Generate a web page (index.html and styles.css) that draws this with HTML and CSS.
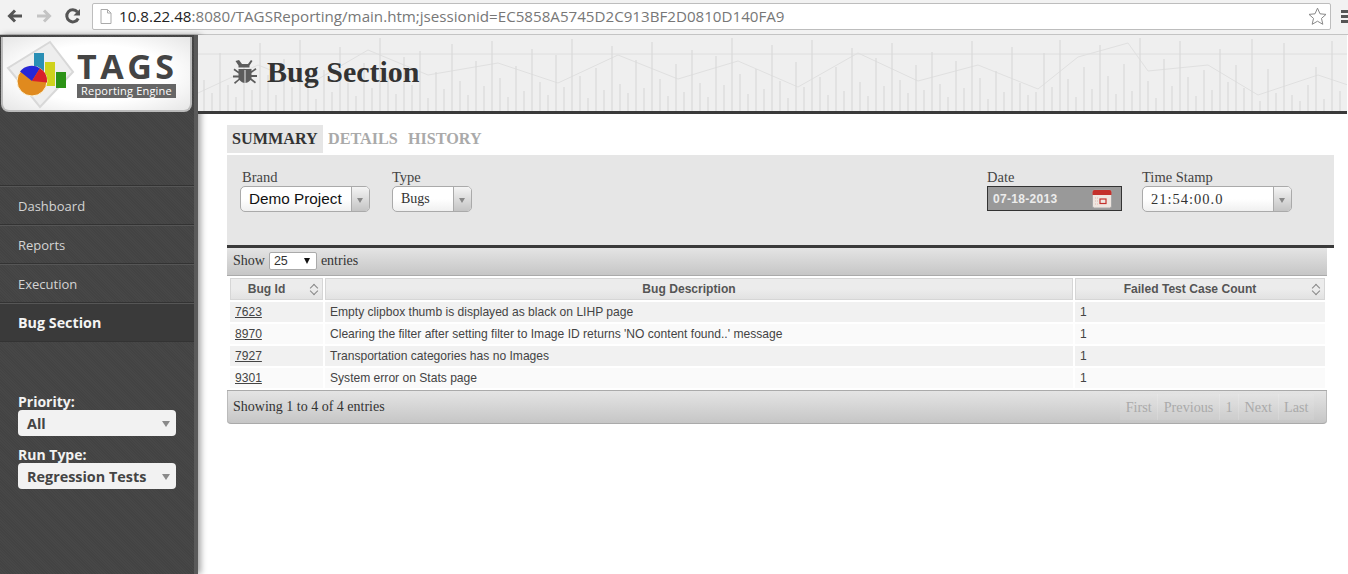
FILE: index.html
```html
<!DOCTYPE html>
<html lang="en">
<head>
  <meta charset="UTF-8">
  <title>TAGS Reporting Engine</title>
  <link rel="stylesheet" href="styles.css">
</head>
<body>
  <div class="chrome">
    <svg class="nav-icon" width="18" height="18" viewBox="0 0 18 18"><path d="M16 9H4M9 3.500 3.500 9 9 14.500" fill="none" stroke="#555" stroke-width="3"/></svg>
    <svg class="nav-icon" width="18" height="18" viewBox="0 0 18 18"><path d="M2 9h12M9 3.500 14.500 9 9 14.500" fill="none" stroke="#c4c4c4" stroke-width="3"/></svg>
    <svg class="nav-icon" width="18" height="18" viewBox="0 0 18 18"><path d="M14.200 11.500A6 6 0 1 1 13.400 5" fill="none" stroke="#555" stroke-width="3"/><path d="M16 2v6.500H9.500z" fill="#555"/></svg>
    <div class="omnibox">
      <svg class="page-icon" width="12" height="15" viewBox="0 0 12 15"><path d="M1 .5h6.500L11 4v10.500H1zM7.500.5V4H11" fill="#fff" stroke="#aaa"/></svg>
      <span class="url"><span class="host">10.8.22.48</span>:8080/TAGSReporting/main.htm;jsessionid=EC5858A5745D2C913BF2D0810D140FA9</span>
      <svg class="star" width="19" height="18" viewBox="0 0 19 18"><path d="M9.500 1.200 12 6.800l6 .6-4.500 4 1.300 5.900-5.300-3.100-5.300 3.100 1.300-5.900L1 7.400l6-.6z" fill="#fff" stroke="#888"/></svg>
    </div>
    <div class="menu-icon"><i></i><i></i><i></i></div>
  </div>

  <div class="app">
    <aside class="sidebar">
      <div class="logo">
        <svg width="71" height="72" viewBox="0 0 71 72">
          <path d="M44 4 67 34 34 69 2 30z" fill="#eeeeee" stroke="#d8d8d8" stroke-width="2"/>
          <rect x="28" y="15" width="10" height="24" fill="#2a8fb5"/>
          <rect x="39" y="24" width="10" height="24" fill="#cfd21c"/>
          <rect x="50" y="34" width="10" height="16" fill="#2c9316"/>
          <circle cx="26" cy="43" r="15" fill="#e08a1e" stroke="#fbf3d8"/>
          <path d="M26 43 14 33.600A15 15 0 0 1 34 30.300z" fill="#2626d8"/>
          <path d="M26 43 34 30.300A15 15 0 0 1 41 44.600z" fill="#d8202a"/>
        </svg>
        <div class="logo-text">
          <div class="logo-name">TAGS</div>
          <div class="logo-tag">Reporting Engine</div>
        </div>
      </div>
      <ul class="side-nav">
        <li>Dashboard</li>
        <li>Reports</li>
        <li>Execution</li>
        <li class="current">Bug Section</li>
      </ul>
      <div class="side-filters">
        <label>Priority:</label>
        <div class="side-select">All</div>
        <label>Run Type:</label>
        <div class="side-select">Regression Tests</div>
      </div>
    </aside>

    <main class="main">
      <header class="page-head">
        <svg class="head-chart" width="1150" height="76" viewBox="0 0 1150 76">
          <path d="M0 19H1150" stroke="#dedede"/>
          <path d="M0 58 60 30 110 50 170 15 230 40 300 28 360 48 420 20 480 44 540 26 600 52 660 18 720 46 780 30 840 54 880 22 930 8 950 36 1010 30 1060 60 1120 40 1150 50" stroke="#e0e0e0" fill="none"/>
          <path d="M6 76V45M14 76V58M22 76V18M30 76V50M38 76V62M46 76V30M54 76V55M62 76V8M70 76V40M78 76V60M86 76V24M94 76V52M102 76V5M110 76V44M118 76V64M126 76V35M134 76V57M142 76V12M150 76V48M158 76V61M166 76V28M174 76V53M182 76V3M190 76V42M198 76V59M206 76V22M214 76V50M222 76V16M230 76V63M238 76V37M246 76V54M254 76V9M262 76V46M270 76V60M278 76V26M286 76V51M294 76V6M302 76V43M310 76V62M318 76V31M326 76V56M334 76V14M342 76V47M350 76V60M358 76V20M366 76V52M374 76V4M382 76V41M390 76V63M398 76V33M406 76V55M414 76V11M422 76V49M430 76V58M438 76V25M446 76V53M454 76V7M462 76V44M470 76V61M478 76V29M486 76V57M494 76V15M502 76V48M510 76V62M518 76V21M526 76V50M534 76V3M542 76V39M550 76V59M558 76V34M566 76V54M574 76V10M582 76V46M590 76V63M598 76V27M606 76V52M614 76V5M622 76V42M630 76V60M638 76V32M646 76V56M654 76V13M662 76V47M670 76V61M678 76V23M686 76V51M694 76V8M702 76V45M710 76V58M718 76V30M726 76V55M734 76V17M742 76V49M750 76V62M758 76V26M766 76V53M774 76V6M782 76V43M790 76V64M798 76V36M806 76V57M814 76V12M822 76V48M830 76V60M838 76V57M846 76V18M854 76V52M862 76V5M870 76V44M878 76V62M886 76V32M894 76V54M902 76V10M910 76V41M918 76V59M926 76V29M934 76V56M942 76V3M950 76V46M958 76V63M966 76V24M974 76V51M982 76V6M990 76V42M998 76V61M1006 76V35M1014 76V55M1022 76V14M1030 76V47M1038 76V30M1046 76V53M1054 76V4M1062 76V66M1070 76V34M1078 76V58M1086 76V8M1094 76V60M1102 76V66M1110 76V50M1118 76V32M1126 76V64M1134 76V6M1142 76V56" stroke="#dadada" stroke-width="1.300" fill="none"/>
        </svg>
        <svg class="bug-icon" width="26" height="26" viewBox="0 0 26 26">
          <path d="M7 1l3 4h6l3-4 1.500 1-3 4.500v2h-11v-2l-3-4.500z" fill="#5c5c5c"/>
          <path d="M6.500 10h13v2l4-3 1 1.500-5 3.500v2h5.500v2h-5.500v1.500l4.500 3.500-1 1.500-4.500-3.500c-1.500 2-3.500 3-5.500 3s-4-1-5.500-3L3 25l-1-1.500 4.500-3.500V18.500H1v-2h5.500v-2l-5-3.500 1-1.500 4 3z" fill="#5c5c5c"/>
          <path d="M13 11v13" stroke="#e8e8e8"/>
        </svg>
        <h1>Bug Section</h1>
      </header>

      <div class="content">
        <div class="tabs">
          <span class="tab active">SUMMARY</span>
          <span class="tab">DETAILS</span>
          <span class="tab">HISTORY</span>
        </div>

        <div class="filters">
          <div class="field">
            <label class="label-brand">Brand</label>
            <div class="combo combo-brand"><span class="combo-value">Demo Project</span><span class="combo-arrow"></span></div>
          </div>
          <div class="field">
            <label>Type</label>
            <div class="combo combo-type"><span class="combo-value">Bugs</span><span class="combo-arrow"></span></div>
          </div>
          <div class="field field-date">
            <label>Date</label>
            <div class="date-box">
              <span>07-18-2013</span>
              <svg width="20" height="20" viewBox="0 0 20 20">
                <rect x=".5" y="1" width="19" height="18" rx="2" fill="#efe6e0" stroke="#a8a8a8"/>
                <path d="M.5 6V3a2 2 0 0 1 2-2h15a2 2 0 0 1 2 2v3z" fill="#c4302b"/>
                <path d="M3 9h3M3 12h3M3 15h3" stroke="#e0b8b0" stroke-dasharray="1 1"/>
                <rect x="8" y="10" width="6" height="4.500" fill="none" stroke="#c4302b" stroke-width="1.200"/>
              </svg>
            </div>
          </div>
          <div class="field">
            <label>Time Stamp</label>
            <div class="combo combo-time"><span class="combo-value">21:54:00.0</span><span class="combo-arrow"></span></div>
          </div>
        </div>

        <div class="grid-wrap">
          <div class="grid-top">
            <span>Show</span>
            <span class="len-select">25<i></i></span>
            <span>entries</span>
          </div>
          <table class="bugs">
            <thead>
              <tr>
                <th class="col-id">Bug Id<span class="sort"></span></th>
                <th>Bug Description</th>
                <th class="col-count">Failed Test Case Count<span class="sort"></span></th>
              </tr>
            </thead>
            <tbody>
              <tr><td><a href="#">7623</a></td><td>Empty clipbox thumb is displayed as black on LIHP page</td><td>1</td></tr>
              <tr><td><a href="#">8970</a></td><td>Clearing the filter after setting filter to Image ID returns 'NO content found..' message</td><td>1</td></tr>
              <tr><td><a href="#">7927</a></td><td>Transportation categories has no Images</td><td>1</td></tr>
              <tr><td><a href="#">9301</a></td><td>System error on Stats page</td><td>1</td></tr>
            </tbody>
          </table>
          <div class="grid-bottom">
            <span>Showing 1 to 4 of 4 entries</span>
            <div class="pager">
              <span>First</span><span>Previous</span><span>1</span><span>Next</span><span>Last</span>
            </div>
          </div>
        </div>
      </div>
    </main>
  </div>
</body>
</html>
```

FILE: styles.css
```css
* {
  box-sizing: border-box;
}
html, body {
  height: 100%;
}
body {
  margin: 0;
  display: flex;
  flex-direction: column;
  overflow: hidden;
  background: #fff;
  color: #333;
  font-family: 'Liberation Serif', serif;
}

/* browser bar */
.chrome {
  height: 35px;
  flex: none;
  display: flex;
  align-items: center;
  padding: 0 0 2px 6px;
  background: #f2f2f2;
  border-bottom: 1px solid #c4c4c4;
}
.nav-icon {
  margin-right: 11px;
  flex: none;
}
.omnibox {
  height: 27px;
  width: 1239px;
  flex: none;
  margin-left: -1px;
  display: flex;
  align-items: center;
  padding: 0 3px 0 7px;
  background: #fff;
  border: 1px solid #bdbdbd;
  border-radius: 2px;
}
.page-icon {
  flex: none;
  margin-right: 7px;
}
.url {
  flex: 1;
  font: 15.150px 'Open Sans', sans-serif;
  color: #777;
  white-space: nowrap;
}
.host {
  color: #222;
}
.menu-icon {
  margin-left: 10px;
  width: 12px;
  flex: none;
}
.menu-icon i {
  display: block;
  height: 3px;
  margin: 2px 0;
  background: #555;
}

.app {
  flex: 1;
  display: flex;
  min-height: 0;
}

/* left column */
.sidebar {
  width: 198px;
  flex: none;
  background: repeating-linear-gradient(45deg, #474747 0 1px, #434343 1px 2px);
  border-right: 4px solid #5a5a5a;
  box-shadow: 3px 0 6px rgba(0, 0, 0, .35);
  font-family: 'Open Sans', sans-serif;
  position: relative;
}
.logo {
  height: 75px;
  margin: 2px 2px 0 1px;
  display: flex;
  align-items: flex-start;
  padding: 1px 0 0 3px;
  background: radial-gradient(ellipse at center, #fff 55%, #e6e6e6 100%);
  border: 2px solid #bbb;
  border-top: 0;
  border-radius: 0 0 8px 8px;
}
.logo-text {
  padding-top: 13px;
}
.logo-name {
  height: 31px;
  font-size: 34px;
  font-weight: 700;
  line-height: 30px;
  letter-spacing: 3.500px;
  color: #444;
}
.logo-tag {
  width: 99px;
  height: 14px;
  margin-top: 2px;
  background: #666;
  color: #fff;
  font-size: 11px;
  line-height: 14px;
  text-align: center;
  letter-spacing: .2px;
}
.side-nav {
  list-style: none;
  margin: 73px 0 0;
  padding: 0;
  border-bottom: 1px solid #333;
}
.side-nav li {
  height: 39px;
  padding-left: 18px;
  border-top: 1px solid #333;
  box-shadow: inset 0 1px 0 #565656;
  font-size: 13px;
  line-height: 40px;
  color: #d4d4d4;
}
.side-nav .current {
  background: #3a3a3a;
  color: #f4f4f4;
  font-size: 14.300px;
  font-weight: 700;
}
.side-filters {
  padding: 51px 0 0 18px;
}
.side-filters label {
  display: block;
  font-size: 14px;
  font-weight: 700;
  line-height: 17px;
  color: #f2f2f2;
}
.side-select {
  position: relative;
  width: 158px;
  height: 26px;
  margin-bottom: 10px;
  padding-left: 9px;
  background: #f2f2f2;
  border-radius: 4px;
  font-size: 14.400px;
  font-weight: 700;
  line-height: 28px;
  color: #444;
}
.side-select::after {
  content: "";
  position: absolute;
  right: 6px;
  top: 11px;
  border: 4px solid transparent;
  border-top: 6px solid #8a8a8a;
  border-bottom: 0;
}

/* page */
.main {
  flex: 1;
  min-width: 0;
}
.page-head {
  position: relative;
  height: 79px;
  display: flex;
  align-items: center;
  padding: 0 0 2px 34px;
  margin-right: 1px;
  background: #efefef;
  border-bottom: 3px solid #3a3a3a;
  overflow: hidden;
}
.head-chart {
  position: absolute;
  left: 0;
  top: 0;
}
.bug-icon {
  position: relative;
  flex: none;
}
.page-head h1 {
  position: relative;
  margin: 0 0 0 9px;
  font-size: 30px;
  font-weight: 700;
  color: #333;
}
.content {
  padding: 11px 0 0 29px;
  width: 1136px;
}
.tabs {
  display: flex;
  height: 28px;
  margin-bottom: 2px;
  font-size: 16.200px;
  font-weight: 700;
  line-height: 29px;
  color: #aaa;
}
.tab {
  padding: 0 5px;
}
.tab.active {
  width: 96px;
  background: #e6e6e6;
  color: #333;
}
.filters {
  height: 93px;
  display: flex;
  padding: 14px 42px 0 13px;
  background: #e6e6e6;
  border-bottom: 3px solid #3a3a3a;
}
.field {
  margin-right: 22px;
}
.field:last-child {
  margin-right: 0;
}
.field-date {
  margin-left: auto;
  margin-right: 20px;
}
.field label {
  display: block;
  height: 17px;
  font-size: 14.500px;
  line-height: 16px;
  color: #444;
}
.field .label-brand {
  padding-left: 2px;
}
.combo {
  height: 26px;
  display: flex;
  border: 1px solid #aaa;
  border-radius: 5px;
  background: linear-gradient(#fff 50%, #f0f0f0);
  overflow: hidden;
}
.combo-value {
  flex: 1;
  padding-left: 8px;
  font-size: 14px;
  line-height: 24px;
  color: #333;
}
.combo-arrow {
  position: relative;
  width: 18px;
  flex: none;
  border-left: 1px solid #aaa;
  background: linear-gradient(#f4f4f4, #c4c4c4);
}
.combo-arrow::after {
  content: "";
  position: absolute;
  left: 5px;
  top: 11px;
  border: 3.500px solid transparent;
  border-top: 5px solid #888;
  border-bottom: 0;
}
.combo-brand {
  width: 130px;
}
.combo-brand .combo-value {
  font: 15.300px/24px 'Liberation Sans', sans-serif;
  color: #111;
}
.combo-type {
  width: 80px;
}
.combo-time {
  width: 150px;
}
.combo-time .combo-value {
  font-size: 14.500px;
  letter-spacing: 1px;
}
.date-box {
  width: 135px;
  height: 25px;
  display: flex;
  align-items: center;
  justify-content: space-between;
  padding: 0 9px 0 5px;
  background: #999;
  border: 1px solid #333;
  font: 700 12px 'Liberation Sans', sans-serif;
  letter-spacing: .3px;
  color: #ececec;
}

/* data table */
.grid-wrap {
  width: 1100px;
}
.grid-top {
  height: 28px;
  display: flex;
  align-items: center;
  gap: 4px;
  padding: 0 0 1px 6px;
  background: linear-gradient(#e4e4e4, #c6c6c6);
  border-bottom: 1px solid #aaa;
  font-size: 14px;
  color: #333;
}
.len-select {
  position: relative;
  width: 48px;
  height: 18px;
  padding-left: 4px;
  background: #fff;
  border: 1px solid #aaa;
  border-radius: 2px;
  font: 12.500px/16px 'Liberation Sans', sans-serif;
}
.len-select i {
  position: absolute;
  right: 6px;
  top: 5px;
  border: 3.500px solid transparent;
  border-top: 6px solid #111;
  border-bottom: 0;
}
.bugs {
  width: 1100px;
  table-layout: fixed;
  border-collapse: separate;
  border-spacing: 2px;
  padding: 0 0 0 1px;
  font: 12.080px 'Liberation Sans', sans-serif;
  color: #444;
}
.bugs th {
  position: relative;
  height: 22px;
  padding: 0 20px 0 0;
  background: linear-gradient(#ececec 50%, #e2e2e2);
  border: 1px solid #d6d6d6;
  font-weight: 700;
  color: #555;
}
.col-id {
  width: 93px;
}
.col-count {
  width: 250px;
}
.sort {
  position: absolute;
  right: 5px;
  top: 5px;
  width: 8px;
  height: 11px;
}
.sort::before,
.sort::after {
  content: "";
  position: absolute;
  left: 0;
  width: 5px;
  height: 5px;
  margin-left: 1.500px;
  border-left: 1px solid #888;
  border-top: 1px solid #888;
  transform: rotate(45deg);
}
.sort::before {
  top: 1px;
}
.sort::after {
  bottom: 1px;
  transform: rotate(225deg);
}
.bugs td {
  height: 20px;
  padding: 0 5px;
}
.bugs tbody tr:nth-child(odd) td {
  background: #f1f1f1;
}
.bugs tbody tr:nth-child(even) td {
  background: #fafafa;
}
.bugs a {
  color: #444;
}
.grid-bottom {
  height: 34px;
  display: flex;
  align-items: center;
  justify-content: space-between;
  padding: 0 13px 0 6px;
  background: linear-gradient(#e4e4e4, #c6c6c6);
  border-top: 1px solid #aaa;
  border-bottom: 1px solid #aaa;
  border-radius: 0 0 4px 4px;
  box-shadow: inset 1px 0 #bbb, inset -1px 0 #bbb;
  font-size: 14px;
}
.pager {
  display: flex;
  height: 26px;
  align-items: center;
  background: rgba(255, 255, 255, .08);
  color: #aaa;
  font-size: 14.200px;
}
.pager span {
  padding: 0 5.500px;
  border-right: 1px solid rgba(255, 255, 255, .15);
  line-height: 26px;
}
.pager span:last-child {
  border-right: 0;
}
```
